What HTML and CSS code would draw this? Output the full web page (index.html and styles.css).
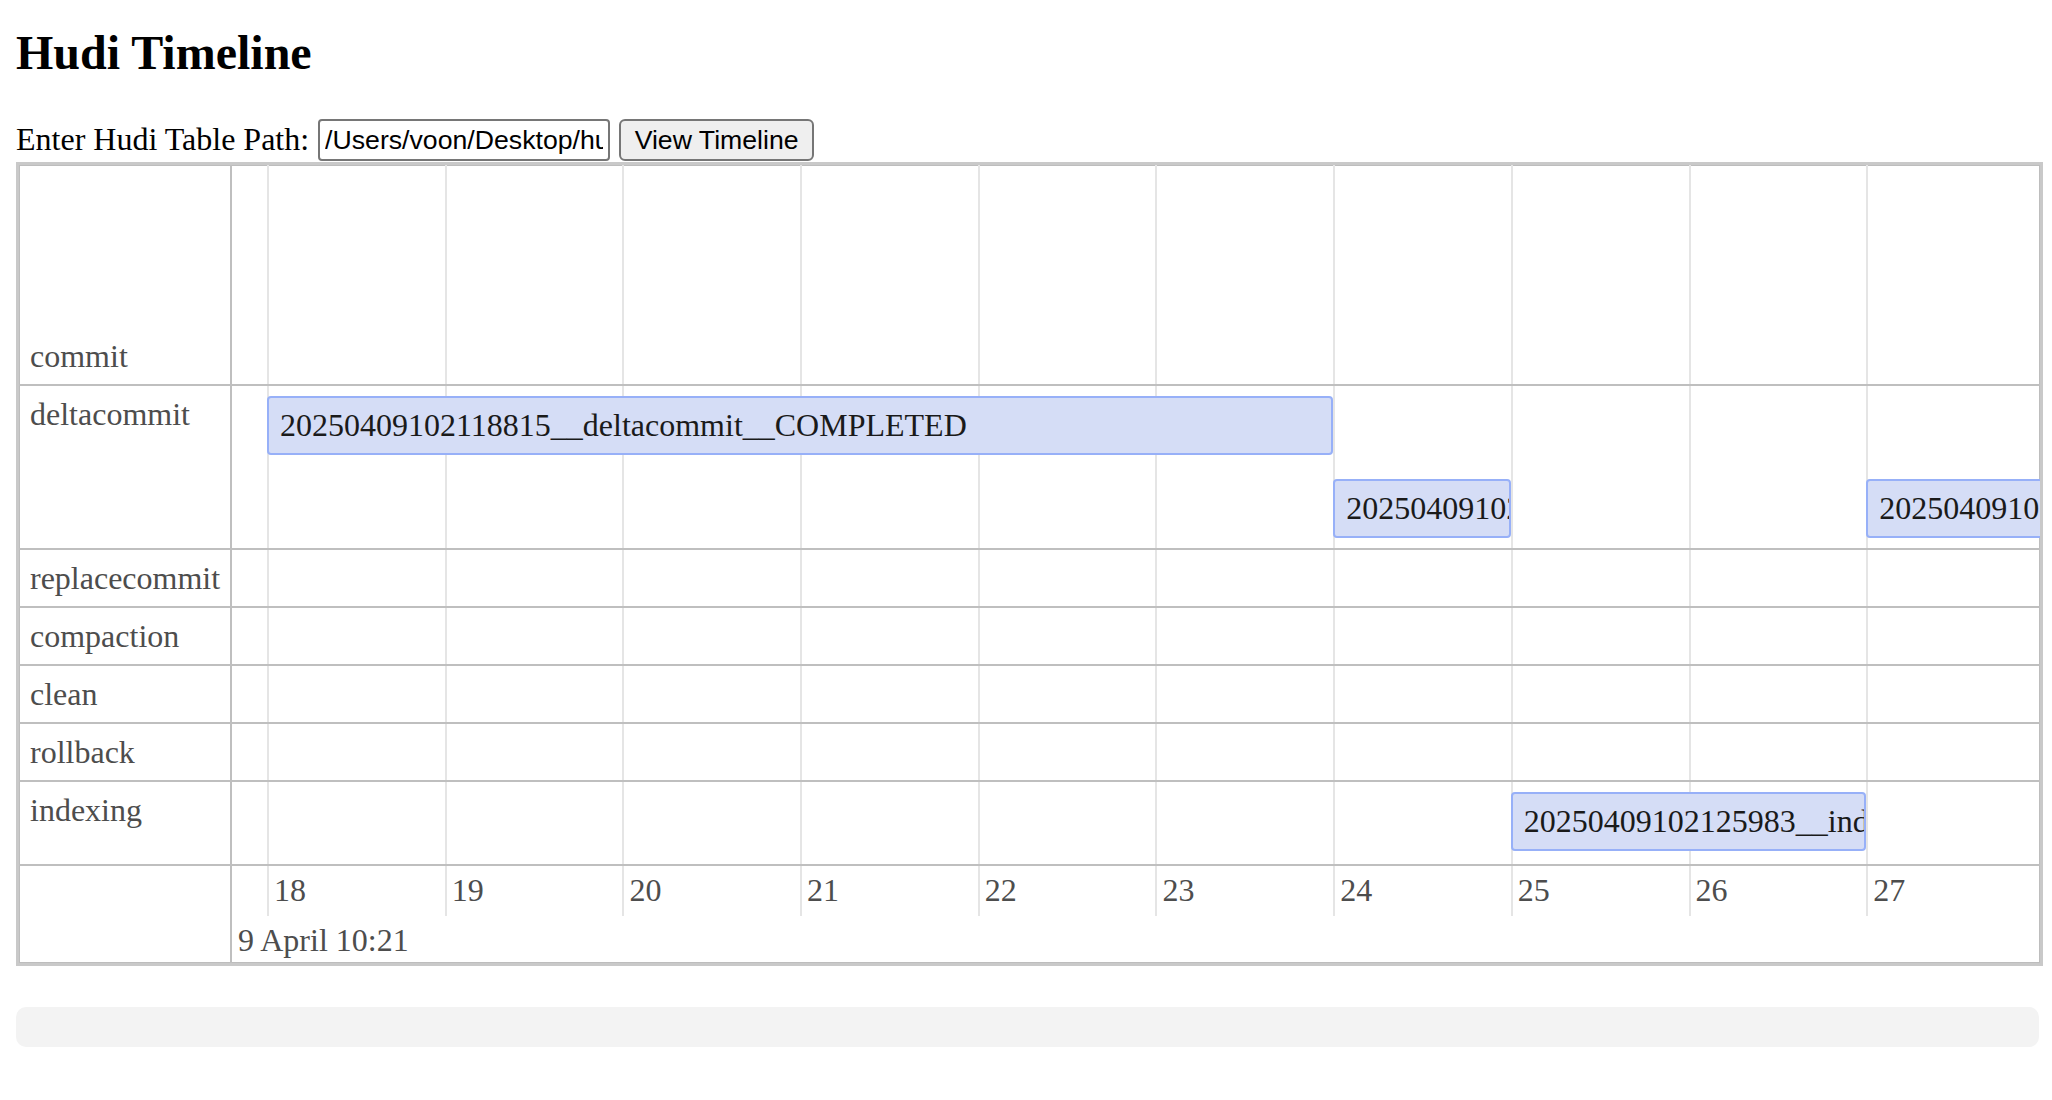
FILE: index.html
```html
<!DOCTYPE html>
<html lang="en">
<head>
<meta charset="utf-8">
<title>Hudi Timeline</title>
<link rel="stylesheet" href="styles.css">
</head>
<body>
<h1 class="title">Hudi Timeline</h1>
<div class="path-form">
  <label class="path-label" for="path">Enter Hudi Table Path:</label>
  <input id="path" class="path-input" type="text" value="/Users/voon/Desktop/hudi-table">
  <button class="view-btn" type="button">View Timeline</button>
</div>

<div class="timeline">
  <div class="tl-row tl-row--commit">
    <div class="tl-label tl-label--bottom">commit</div>
    <div class="tl-lane"></div>
  </div>
  <div class="tl-row">
    <div class="tl-label">deltacommit</div>
    <div class="tl-lane tl-lane--two">
      <div class="tl-item" style="grid-column: 2 / 8; grid-row: 1;">20250409102118815__deltacommit__COMPLETED</div>
      <div class="tl-item" style="grid-column: 8 / 9; grid-row: 2;">20250409102124562__deltacommit__COMPLETED</div>
      <div class="tl-item" style="grid-column: 11 / 12; grid-row: 2;">20250409102127301__deltacommit__COMPLETED</div>
    </div>
  </div>
  <div class="tl-row">
    <div class="tl-label">replacecommit</div>
    <div class="tl-lane"></div>
  </div>
  <div class="tl-row">
    <div class="tl-label">compaction</div>
    <div class="tl-lane"></div>
  </div>
  <div class="tl-row">
    <div class="tl-label">clean</div>
    <div class="tl-lane"></div>
  </div>
  <div class="tl-row">
    <div class="tl-label">rollback</div>
    <div class="tl-lane"></div>
  </div>
  <div class="tl-row">
    <div class="tl-label">indexing</div>
    <div class="tl-lane tl-lane--one">
      <div class="tl-item" style="grid-column: 9 / 11; grid-row: 1;">20250409102125983__indexing__COMPLETED</div>
    </div>
  </div>
  <div class="tl-row tl-row--axis">
    <div class="tl-label"></div>
    <div class="tl-axis">
      <div class="tl-minor">
        <span class="tl-tick" style="grid-column: 2;">18</span>
        <span class="tl-tick" style="grid-column: 3;">19</span>
        <span class="tl-tick" style="grid-column: 4;">20</span>
        <span class="tl-tick" style="grid-column: 5;">21</span>
        <span class="tl-tick" style="grid-column: 6;">22</span>
        <span class="tl-tick" style="grid-column: 7;">23</span>
        <span class="tl-tick" style="grid-column: 8;">24</span>
        <span class="tl-tick" style="grid-column: 9;">25</span>
        <span class="tl-tick" style="grid-column: 10;">26</span>
        <span class="tl-tick" style="grid-column: 11;">27</span>
      </div>
      <div class="tl-major">9 April 10:21</div>
    </div>
  </div>
</div>

<div class="details"></div>
</body>
</html>
```

FILE: styles.css
```css
* {
  box-sizing: border-box;
}

html, body {
  background: #ffffff;
}

body {
  margin: 0;
  padding: 0 16px;
  font-family: "Liberation Serif", "Times New Roman", serif;
  font-size: 32px;
  color: #000000;
}

.title {
  margin: 25px 0 39px;
  font-size: 48px;
  line-height: 55px;
  font-weight: bold;
}

.path-form {
  display: flex;
  align-items: center;
  gap: 9px;
  height: 42px;
  margin-bottom: 1px;
}

.path-label {
  line-height: 36px;
  margin-top: -2px;
}

.path-input {
  width: 292px;
  height: 42px;
  margin: 0;
  padding: 0 5px;
  border: 2px solid #767676;
  border-radius: 4px;
  font-family: "Liberation Sans", Arial, sans-serif;
  font-size: 26.67px;
  color: #000000;
  background: #ffffff;
}

.view-btn {
  width: 195px;
  height: 42px;
  margin: 0;
  padding: 0;
  border: 2px solid #767676;
  border-radius: 6px;
  background: #efefef;
  font-family: "Liberation Sans", Arial, sans-serif;
  font-size: 26.67px;
  color: #000000;
}

/* timeline */
.timeline {
  width: 2027px;
  border: 3px solid #c9c9c9;
  box-shadow: inset 0 0 0 1px #bdbdbd;
}

.tl-row {
  display: flex;
  border-bottom: 2px solid #bfbfbf;
}

.tl-row:last-child {
  border-bottom: none;
}

.tl-row--commit {
  height: 221px;
}

.tl-row--axis {
  height: 97px;
}

.tl-label {
  flex: none;
  width: 213px;
  padding: 10px 10px 10px 11px;
  border-right: 2px solid #bfbfbf;
  line-height: 36px;
  color: #4d4d4d;
  white-space: nowrap;
}

.tl-label--bottom {
  display: flex;
  flex-direction: column;
  justify-content: flex-end;
}

.tl-lane,
.tl-minor {
  flex: 1;
  min-width: 0;
  overflow: hidden;
  display: grid;
  grid-template-columns: 35px repeat(10, 177.7px);
  background-image: repeating-linear-gradient(90deg, #e5e5e5 0 2px, transparent 2px 177.7px);
  background-repeat: no-repeat;
  background-position: 35px 0;
}

.tl-lane--two {
  grid-template-rows: 59px 59px;
  row-gap: 24px;
  padding: 10px 0 10px;
}

.tl-lane--one {
  grid-template-rows: 59px;
  padding: 10px 0 13px;
}

.tl-item {
  height: 59px;
  padding: 0 10px 0 11px;
  border: 2px solid #97b0f8;
  border-radius: 4px;
  background: #d5ddf6;
  color: #1a1a1a;
  line-height: 55px;
  white-space: nowrap;
  overflow: hidden;
}

.tl-axis {
  flex: 1;
  min-width: 0;
  display: flex;
  flex-direction: column;
  overflow: hidden;
}

.tl-minor {
  flex: none;
  height: 50px;
}

.tl-tick {
  grid-row: 1;
  padding: 6px 0 0 7px;
  line-height: 36px;
  color: #4d4d4d;
}

.tl-major {
  padding: 6px 0 0 6px;
  line-height: 36px;
  color: #4d4d4d;
  white-space: nowrap;
}

.details {
  width: 2023px;
  height: 40px;
  margin-top: 41px;
  border-radius: 10px;
  background: #f3f3f3;
}
```
